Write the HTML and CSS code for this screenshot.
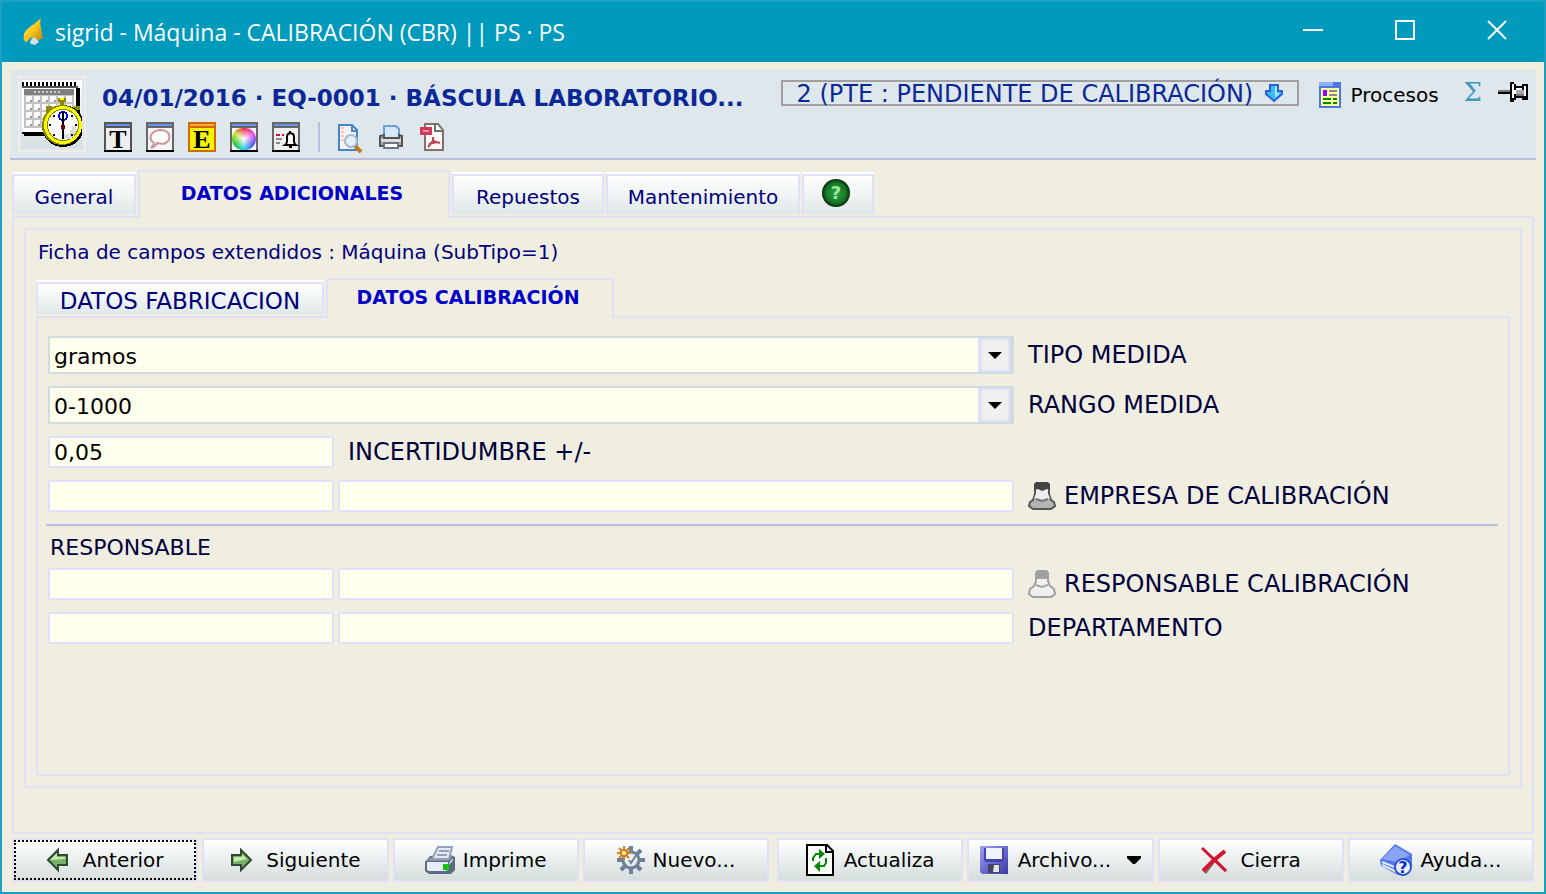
FILE: index.html
```html
<!DOCTYPE html>
<html lang="es">
<head>
<meta charset="utf-8">
<title>sigrid - Máquina - CALIBRACIÓN (CBR)</title>
<link rel="stylesheet" href="styles.css">
</head>
<body>
<div class="window">
  <header class="titlebar">
    <svg class="app-icon" width="20" height="28" viewBox="0 0 20 28">
      <defs><linearGradient id="flame" x1="0" y1="0" x2="1" y2="1"><stop offset="0" stop-color="#ffe680"/><stop offset=".5" stop-color="#ffc61a"/><stop offset="1" stop-color="#b07c10"/></linearGradient></defs>
      <path d="M9 20l3-2 4 6-4 3-4-1-1-2z" fill="#d9dde4"/>
      <path d="M18 0c-1 3-1 6 0 10l2 10-4 2-6-3-3 1-3 4c-3 0-4-3-3-8 1-5 10-9 17-16z" fill="url(#flame)"/>
    </svg>
    <span class="window-title">sigrid - Máquina - CALIBRACIÓN (CBR) || PS · PS</span>
    <div class="window-controls">
      <button type="button" aria-label="Minimizar"><svg width="20" height="20"><path d="M0 10h20" stroke="#fff" stroke-width="2"/></svg></button>
      <button type="button" aria-label="Maximizar"><svg width="20" height="20"><path d="M1 1h18v18H1z" fill="none" stroke="#fff" stroke-width="2"/></svg></button>
      <button type="button" aria-label="Cerrar"><svg width="20" height="20"><path d="M1 1l18 18M19 1L1 19" stroke="#fff" stroke-width="2"/></svg></button>
    </div>
  </header>

  <main class="content">
    <section class="record">
      <button type="button" class="record-icon" aria-label="Calibración">
        <svg width="64" height="64" viewBox="0 0 64 64" shape-rendering="crispEdges">
          <path d="M2 4h56v2h2v46h-2v2H4v-2H2z" fill="#000"/>
          <path d="M2 4h54v46H2z" fill="#fff"/><path d="M0 4h2v46H0z" fill="#555"/>
          <path d="M4 8h50v38H4z" fill="#c4c4c4"/><path d="M4 7h50v6H4z" fill="#808080"/>
          <path d="M14 10h26" stroke="#ccc" stroke-width="2" stroke-dasharray="2 2"/>
          <path d="M2 2h56" stroke="#000" stroke-width="4" stroke-dasharray="2 2"/><path d="M2 5h56" stroke="#555" stroke-width="2"/>
          <path d="M6 17h48M6 25h48M6 33h48M6 41h48" stroke="#fff" stroke-width="6" stroke-dasharray="6 2"/>
          <path d="M10 19h40M10 27h40M10 35h40M10 43h40" stroke="#999" stroke-width="2" stroke-dasharray="2 6"/>
          <path d="M38 16h8v4h-2v4h-4v-4h-2z" fill="#8a8a00"/><path d="M40 16h4v2h-4z" fill="#ff0"/>
          <path d="M26 24h6v6h-6zM54 24h6v4h-6z" fill="#8a8a00"/>
          <circle cx="43" cy="44" r="21" fill="#000"/><circle cx="42" cy="43" r="20" fill="#8a8a00"/>
          <circle cx="43" cy="43" r="19" fill="#ff0"/><circle cx="43" cy="43" r="16" fill="#8a8a00"/><circle cx="43" cy="43" r="15" fill="#fff"/>
          <path d="M44 57h8v-2h2v-4h2v-7h-4v4h-2v4h-6z" fill="#ddd"/>
          <path d="M42 30h2v2h-2zM42 55h2v2h-2zM29 42h2v2h-2zM55 42h2v2h-2zM33 33h2v2h-2zM51 33h2v2h-2zM33 52h2v2h-2zM51 52h2v2h-2z" fill="#000"/>
          <circle cx="43" cy="34" r="4" fill="none" stroke="#00f" stroke-width="2"/>
          <path d="M42 30h2v26h-2z" fill="#000"/><path d="M41 43h4v4h-4z" fill="#700"/>
        </svg>
      </button>
      <div class="record-main">
        <div class="record-row">
          <h1 class="record-title">04/01/2016 · EQ-0001 · BÁSCULA LABORATORIO...</h1>
          <button type="button" class="state"><span>2 (PTE : PENDIENTE DE CALIBRACIÓN)</span>
            <svg width="18" height="18" viewBox="0 0 18 18"><path d="M5 1h8v6h4v3l-8 7-8-7V7h4z" fill="#39bdf5" stroke="#2f5fdc" stroke-width="2"/><path d="M10 2v12l5-5h-3V2z" fill="#9eeaff"/></svg>
          </button>
          <button type="button" class="processes">
            <svg width="22" height="26" viewBox="0 0 22 26" shape-rendering="crispEdges"><path d="M0 0h22v26H0z" fill="#4a78e0"/><path d="M0 0h14v4H0z" fill="#8fb0f5"/><path d="M2 6h18v18H2z" fill="#ffffa0"/><path d="M4 8h4v6H4z" fill="#90f"/><path d="M10 9h8M10 13h8" stroke="#888" stroke-width="2"/><path d="M4 17h8M4 21h8M14 17h4M14 21h4" stroke="#080" stroke-width="2"/></svg>
            <span>Procesos</span>
          </button>
          <button type="button" class="sum" aria-label="Suma">Σ</button>
          <button type="button" class="pin" aria-label="Fijar">
            <svg width="30" height="20" viewBox="0 0 30 20" shape-rendering="crispEdges"><path d="M0 8h12v4H0z" fill="#000"/><path d="M0 8h12v2H0z" fill="#777"/><path d="M12 0h4v2h2v2h6V2h6v16h-6v-2h-6v2h-2v2h-4z" fill="#000"/><path d="M14 2h2v14h-2zM18 6h6v2h-6zM26 4h2v10h-2zM16 8h2v4h-2z" fill="#fff"/><path d="M18 8h8v4h-8z" fill="#aaa"/><path d="M18 12h8v2h-8z" fill="#777"/></svg>
          </button>
        </div>
        <div class="toolbar">
          <button type="button" class="tool" aria-label="Texto"><svg width="28" height="30" viewBox="0 0 28 30"><path d="M0 0h28v30H0z" fill="#555"/><path d="M0 28h28v2H0z" fill="#000"/><path d="M2 2h24v2H2z" fill="#6494ea"/><path d="M2 6h24v22H2z" fill="#eee"/><text x="14" y="26" text-anchor="middle" class="glyph">T</text></svg></button>
          <button type="button" class="tool" aria-label="Comentario"><svg width="28" height="30" viewBox="0 0 28 30"><path d="M0 0h28v30H0z" fill="#666"/><path d="M0 28h28v2H0z" fill="#000"/><path d="M2 2h24v2H2z" fill="#6494ea"/><path d="M2 6h24v22H2z" fill="#f5f5f5"/><path d="M8 21c-6-4-4-12 6-13 11 0 13 11 3 14l-6-1c-1 3-3 4-6 5 2-2 3-3 3-5z" fill="#fff" stroke="#c9969c" stroke-width="2"/></svg></button>
          <button type="button" class="tool" aria-label="Etiqueta"><svg width="28" height="30" viewBox="0 0 28 30"><path d="M0 0h28v30H0z" fill="#d06a00"/><path d="M2 2h24v2H2z" fill="#ffa940"/><path d="M2 6h24v22H2z" fill="#f4f400"/><text x="14" y="26" text-anchor="middle" class="glyph">E</text></svg></button>
          <button type="button" class="tool" aria-label="Color"><span class="wheel"></span><svg width="28" height="30" viewBox="0 0 28 30"><path d="M0 0h28v30H0z" fill="#666"/><path d="M0 28h28v2H0z" fill="#000"/><path d="M2 2h24v2H2z" fill="#6494ea"/><path d="M2 6h24v22H2z" fill="#f5f5f5"/></svg></button>
          <button type="button" class="tool" aria-label="Aviso"><svg width="28" height="30" viewBox="0 0 28 30"><path d="M0 0h28v30H0z" fill="#666"/><path d="M0 28h28v2H0z" fill="#000"/><path d="M2 2h24v2H2z" fill="#6494ea"/><path d="M2 6h24v22H2z" fill="#f0f0f0"/><path d="M4 13h4M10 13h2" stroke="#d03" stroke-width="2"/><path d="M4 17h6M4 21h4" stroke="#888" stroke-width="2"/><path d="M13 23c3-2 2-5 2-8 0-5 7-5 7 0 0 3-1 6 2 8zM17 25h3M18 9v2" fill="#fff" stroke="#000" stroke-width="2"/></svg></button>
          <span class="divider"></span>
          <div class="documents">
            <button type="button" class="tool" aria-label="Vista previa"><svg width="24" height="30" viewBox="0 0 24 30"><path d="M1 3h13l5 5v20H1z" fill="#f8f4f6" stroke="#4585c8" stroke-width="2"/><path d="M14 3v6h5" fill="none" stroke="#4585c8" stroke-width="2"/><path d="M3 6h3M3 10h3M3 14h3M3 18h3" stroke="#f2c4c8" stroke-width="2"/><path d="M17 24l6 6" stroke="#c47a20" stroke-width="4"/><circle cx="13" cy="19" r="6" fill="#e2f0fc" stroke="#a4b8cc" stroke-width="2"/></svg></button>
            <button type="button" class="tool" aria-label="Imprimir"><svg width="24" height="26" viewBox="0 0 24 26"><path d="M5 12V2h12l3 3v8" fill="#d6e8ff" stroke="#6b9fd8" stroke-width="2"/><path d="M1 12l4-1v3h15v-3l3 1v10H1z" fill="#aaa" stroke="#555" stroke-width="2"/><path d="M2 15h20v3H2z" fill="#ddd"/><path d="M5 19h14v5H5z" fill="#fff" stroke="#6b7785" stroke-width="2"/></svg></button>
            <button type="button" class="tool" aria-label="PDF"><svg width="24" height="28" viewBox="0 0 24 28"><path d="M5 1h13l5 6v20H5z" fill="#fff8f4" stroke="#83706a" stroke-width="2"/><path d="M15 1v7h8" fill="#fff" stroke="#607a68" stroke-width="2"/><path d="M0 4h12v8H0z" fill="#cc3a55"/><path d="M3 8h6" stroke="#e890a0" stroke-width="2"/><path d="M13 14v4l-5 6M13 18l7 2M9 21l8-2" stroke="#bb4455" stroke-width="2" fill="none"/></svg></button>
          </div>
        </div>
      </div>
    </section>

    <nav class="tabs">
      <button type="button" class="tab tab-s">General</button>
      <button type="button" class="tab tab-active tab-l">DATOS ADICIONALES</button>
      <button type="button" class="tab tab-m">Repuestos</button>
      <button type="button" class="tab tab-ml">Mantenimiento</button>
      <button type="button" class="tab tab-help" aria-label="Ayuda"><svg width="28" height="28" viewBox="0 0 28 28"><defs><radialGradient id="green"><stop offset="0" stop-color="#2ea043"/><stop offset=".7" stop-color="#187a26"/><stop offset="1" stop-color="#062c0c"/></radialGradient></defs><circle cx="14" cy="14" r="14" fill="url(#green)"/><text x="14" y="20" text-anchor="middle" class="question">?</text></svg></button>
    </nav>
    <section class="page">
      <div class="group">
        <h2 class="group-title">Ficha de campos extendidos : Máquina (SubTipo=1)</h2>
        <nav class="tabs tabs-inner">
          <button type="button" class="tab tab-inner tab-wide">DATOS FABRICACION</button>
          <button type="button" class="tab tab-active tab-inner tab-wide">DATOS CALIBRACIÓN</button>
        </nav>
        <form class="sheet">
          <div class="fields">
            <div class="combo"><select id="tipo"><option>gramos</option></select></div>
            <label for="tipo">TIPO MEDIDA</label>
          </div>
          <div class="fields">
            <div class="combo"><select id="rango"><option>0-1000</option></select></div>
            <label for="rango">RANGO MEDIDA</label>
          </div>
          <div class="fields">
            <input id="incert" type="text" value="0,05">
            <label for="incert">INCERTIDUMBRE +/-</label>
          </div>
          <div class="fields">
            <input id="empresa" type="text"><input type="text" aria-label="Nombre de la empresa">
            <label for="empresa"><svg width="28" height="28" viewBox="0 0 28 28"><path d="M7 8v4l-2 6-3 2-1 4 4 3h18l4-3-1-4-3-2-2-6V8z" fill="#b4b4b4" stroke="#555" stroke-width="2"/><path d="M8 6h12v6l2 4-3 1-5 1-5-1-3-1 2-4z" fill="#eee"/><path d="M6 8V2l2-2h12l2 2v6l-3-1-5 2-4-2z" fill="#444"/><path d="M8 17l6 2 6-2" stroke="#777" stroke-width="2" fill="none"/></svg>EMPRESA DE CALIBRACIÓN</label>
          </div>
          <hr class="rule">
          <h3 class="section-title">RESPONSABLE</h3>
          <div class="fields">
            <input id="resp" type="text"><input type="text" aria-label="Nombre del responsable">
            <label for="resp"><svg width="28" height="28" viewBox="0 0 28 28"><path d="M8 8v3l-2 5-4 3-1 5 4 3h18l4-3-1-5-4-3-2-5V8z" fill="#f0f0ee" stroke="#a0a0a0" stroke-width="2"/><path d="M7 8V3l2-3h10l2 3v5l-3-1-4 1-4-1z" fill="#a0a0a0"/><path d="M8 15l6 2 6-2" stroke="#a8a8a8" stroke-width="2" fill="none"/></svg>RESPONSABLE CALIBRACIÓN</label>
          </div>
          <div class="fields">
            <input id="depto" type="text"><input type="text" aria-label="Nombre del departamento">
            <label for="depto">DEPARTAMENTO</label>
          </div>
        </form>
      </div>
    </section>

    <footer class="actions">
      <div class="action-group">
        <button type="button" class="action action-focus"><svg width="22" height="22" viewBox="0 0 22 22"><path d="M1 11L11 1v5h9v10h-9v5z" fill="#78b068" stroke="#304a30" stroke-width="2"/><path d="M3 11l7-7v4h8v2z" fill="#c4ecac"/></svg>Anterior</button>
        <button type="button" class="action"><svg width="22" height="22" viewBox="0 0 22 22"><path d="M21 11L11 1v5H2v10h9v5z" fill="#78b068" stroke="#304a30" stroke-width="2"/><path d="M4 8h8V5l5 5-13 3z" fill="#c4ecac"/></svg>Siguiente</button>
        <button type="button" class="action action-print"><svg width="30" height="28" viewBox="0 0 30 28"><path d="M5 10l-5 6v9l4 3h22l4-4V11l-4-2z" fill="#5c6a80"/><path d="M13 1h14l-3 12H7z" fill="#e6eaf2" stroke="#94a0b8" stroke-width="2"/><path d="M14 5h10M12 9h10" stroke="#94a0b8" stroke-width="2"/><path d="M5 11l-3 4h21l5-5-3 1-2 3H8z" fill="#8490a6"/><path d="M2 16h21v8l-3 1H4l-2-1z" fill="#e8eef6"/><path d="M24 16l4-4v3l-4 4z" fill="#b4c0d0"/><path d="M18 18h6v6h-6z" fill="#12c412"/></svg>Imprime</button>
        <button type="button" class="action action-print"><svg width="28" height="28" viewBox="0 0 28 28"><g stroke="#6d8299" fill="none"><circle cx="14" cy="14" r="8" stroke-width="3"/><path d="M14 0v5M14 23v5M23 14h5M0 14h5M20 8l4-4M4 24l4-4M20 20l4 4" stroke-width="4"/><path d="M12 14l2 3 6-9" stroke-width="2"/></g><path d="M7 0v14M0 7h14M2 2l10 10M12 2L2 12" stroke="#d08324" stroke-width="2"/><circle cx="7" cy="7" r="3" fill="#fff3b0" stroke="#d08324" stroke-width="2"/></svg>Nuevo...</button>
      </div>
      <div class="action-group">
        <button type="button" class="action action-refresh"><svg width="28" height="32" viewBox="0 0 28 32"><path d="M1 1h20l6 6v24H1z" fill="#fff" stroke="#000" stroke-width="2"/><path d="M20 1v7h7" fill="none" stroke="#000" stroke-width="2"/><path d="M7 17v-3l3-4h5M20 14v5l-2 3h-5" fill="none" stroke="#080" stroke-width="2"/><path d="M13 5l6 5-6 5zM14 17l-6 5 6 6z" fill="#080"/></svg>Actualiza</button>
        <button type="button" class="action action-file"><svg width="28" height="28" viewBox="0 0 28 28"><defs><linearGradient id="disk" x1="0" x2="1" y2="1"><stop offset="0" stop-color="#a0a0f4"/><stop offset="1" stop-color="#3838a8"/></linearGradient></defs><path d="M0 0h28v28H2l-2-2z" fill="url(#disk)"/><path d="M4 2h20v12l-2 2H6l-2-2z" fill="#4444b0"/><path d="M6 2h16v11H6z" fill="#eef3ff"/><path d="M8 18h12v9H8z" fill="#444460"/><path d="M14 19h5v7h-6z" fill="#dfe4ea"/></svg>Archivo...<svg class="caret" width="14" height="8" viewBox="0 0 14 8"><path d="M0 0h14v2L8 8H6L0 2z"/></svg></button>
        <button type="button" class="action"><svg width="26" height="28" viewBox="0 0 26 28"><path d="M4 27l9-12M13 14l10-8M14 14l11 11" stroke="#777" stroke-width="3"/><path d="M1 2l24 23" stroke="#d8152f" stroke-width="3"/><path d="M2 25L12 15 24 5" stroke="#d8152f" stroke-width="4" fill="none"/></svg>Cierra</button>
        <button type="button" class="action action-print"><svg width="32" height="32" viewBox="0 0 32 32"><path d="M0 16L15 0l17 10v11L18 31 1 22z" fill="#5478e8"/><path d="M2 15L15 2l15 9-13 7z" fill="#8ca4f6"/><path d="M2 18l15 6M2 21l15 7" stroke="#dfe7ff" stroke-width="2"/><circle cx="23" cy="23" r="8" fill="#eef2ff" stroke="#2450e0" stroke-width="2"/><text x="23" y="29" text-anchor="middle" class="help-mark">?</text></svg>Ayuda...</button>
      </div>
    </footer>
  </main>
</div>
</body>
</html>
```
FILE: styles.css
```css
*, *::before, *::after { box-sizing: border-box; }
body {
  margin: 0;
  font-family: "DejaVu Sans", Verdana, sans-serif;
  font-size: 20px;
  color: #000;
  background: #f0eee1;
}
button, input, select { font: inherit; color: inherit; border: 0; margin: 0; padding: 0; background: none; border-radius: 0; }
h1, h2, h3 { margin: 0; font-weight: 400; }
svg { display: block; flex: none; overflow: visible; }

.window { min-height: 100vh; display: flex; flex-direction: column; border: 2px solid #1ba0c1; }
.titlebar { height: 60px; flex: none; display: flex; align-items: center; padding: 0 37px 0 21px; gap: 12px; background: #009abd; color: #fff; }
.window-title { flex: 1; font-family: "Open Sans", "Noto Sans", sans-serif; font-size: 23px; line-height: 32px; }
.window-controls { display: flex; gap: 72px; padding-bottom: 4px; }

.content { flex: 1; display: flex; flex-direction: column; padding: 8px 10px 10px; }
.record { display: flex; gap: 16px; margin: 0 -2px; padding: 6px 8px; background: #dde7ec; border-bottom: 2px solid #bcbcde; }
.record-icon { width: 68px; height: 76px; flex: none; display: flex; align-items: center; justify-content: center; border: 2px solid #f0eee1; outline: 2px solid #e0e0f8; outline-offset: -4px; background: linear-gradient(#fff, #d5dfe0); }
.record-main { flex: 1; min-width: 0; }
.record-row { display: flex; align-items: center; height: 40px; }
.record-title { flex: 1; min-width: 0; white-space: nowrap; font-size: 23px; line-height: 32px; font-weight: 700; color: #0b2896; padding-top: 4px; }
.state { width: 518px; height: 26px; margin: 0 20px 6px; padding: 0 14px; display: flex; align-items: center; justify-content: space-between; border: 2px solid #a0a0a0; color: #0b2896; font-size: 24px; line-height: 24px; white-space: nowrap; }
.state span { padding-top: 2px; }
.processes { display: flex; align-items: center; gap: 10px; margin: 0 25px 2px 0; line-height: 26px; }
.sum { font-family: "DejaVu Serif", serif; font-size: 26px; line-height: 26px; color: #4099bf; margin: 0 16px 8px 0; }
.pin { margin-bottom: 8px; }
.toolbar { display: flex; align-items: center; gap: 14px; height: 36px; padding: 6px 0 0 2px; }
.tool { position: relative; }
.divider { width: 2px; height: 30px; margin: 0 4px; background: #bcbcde; }
.documents { display: flex; align-items: center; gap: 17px; }
.wheel { position: absolute; left: 2px; top: 6px; width: 24px; height: 22px; border-radius: 11px; background: radial-gradient(#fff, transparent 70%), conic-gradient(#f02040, #f040e0, #4040f0, #20d0f0, #10c020, #c0e020, #f02040); }
.glyph { font-family: "Liberation Serif", serif; font-weight: 700; font-size: 26px; }

.tabs { display: flex; align-items: flex-end; gap: 2px; height: 56px; }
.tabs-inner { height: 48px; }
.tab { height: 40px; margin-bottom: 2px; padding-top: 4px; line-height: 24px; color: #00007a; white-space: nowrap; border: 2px solid #e0e0f8; border-bottom: 0; box-shadow: 0 -2px #fff; background: linear-gradient(#fff, #dfe8e8); }
.tab-inner { height: 32px; font-size: 23px; }
.tab-active { position: relative; height: 48px; margin-bottom: -2px; padding: 0 4px 4px 0; font-weight: 700; font-size: 19px; color: #0000c8; background: #f0eee1; box-shadow: none; border-radius: 2px 2px 0 0; }
.tab-active.tab-inner { height: 40px; }
.tab-s { width: 124px; }
.tab-m { width: 152px; }
.tab-ml { width: 194px; }
.tab-l { width: 312px; }
.tab-wide { width: 288px; }
.tab-help { width: 72px; padding: 0 4px 4px 0; display: flex; align-items: center; justify-content: center; }
.question { font-size: 18px; font-weight: 700; fill: #9aeaa0; }

.page { flex: 1; display: flex; flex-direction: column; border: 2px solid #e0e0f8; border-radius: 2px; padding: 10px 10px 44px; }
.group { flex: 1; display: flex; flex-direction: column; border: 2px solid #e0e0f8; border-radius: 2px; padding: 8px 10px 10px; }
.group-title { font-size: 20px; line-height: 28px; padding-left: 2px; color: #00007a; }
.group .tabs { margin-top: 2px; }
.sheet { flex: 1; border: 2px solid #e0e0f8; border-radius: 2px; padding: 18px 10px; }
.fields { display: grid; grid-template-columns: minmax(0, 286fr) minmax(0, 676fr) minmax(0, 480fr); column-gap: 4px; align-items: center; margin-bottom: 12px; }
.fields label { display: flex; align-items: center; gap: 8px; padding-left: 10px; font-size: 24px; line-height: 28px; color: #00003c; white-space: nowrap; }
.fields input { width: 100%; height: 32px; padding: 0 4px; font-size: 22px; border: 2px solid #e0e0f8; border-radius: 2px; background: #ffffee; }
.combo { position: relative; grid-column: span 2; }
.combo select { display: block; width: 100%; height: 38px; padding: 2px 40px 0 4px; font-size: 22px; appearance: none; border: 2px solid #d0dcdc; border-right-width: 4px; background: #ffffee; }
.combo::before { content: ""; position: absolute; right: 4px; top: 2px; width: 32px; height: 34px; border: 2px solid #e0e0f8; border-left-width: 4px; background: #f0f0f0; pointer-events: none; }
.combo::after { content: ""; position: absolute; right: 12px; top: 16px; border: 7px solid transparent; border-top-color: #000; border-bottom: 0; pointer-events: none; }
.rule { border: 0; height: 2px; margin: 0 0 8px -2px; background: #bcbcde; }
.section-title { font-size: 22px; line-height: 28px; padding-left: 2px; margin-bottom: 6px; color: #00003c; }

.actions { display: flex; gap: 8px; padding-top: 4px; }
.action-group { flex: 1; display: grid; grid-template-columns: repeat(4, minmax(0, 1fr)); gap: 4px; }
.action { height: 44px; display: flex; align-items: center; justify-content: center; gap: 14px; border: 2px solid #e0e0f8; border-radius: 2px; background: linear-gradient(#fff, #d5dedd); white-space: nowrap; }
.action-focus { outline: 2px dotted #000; outline-offset: -4px; }
.action-print { gap: 8px; }
.action-refresh { gap: 10px; }
.action-file { gap: 10px; }
.caret { margin-left: 6px; }
.help-mark { font-size: 16px; font-weight: 700; fill: #1030c0; }
```
